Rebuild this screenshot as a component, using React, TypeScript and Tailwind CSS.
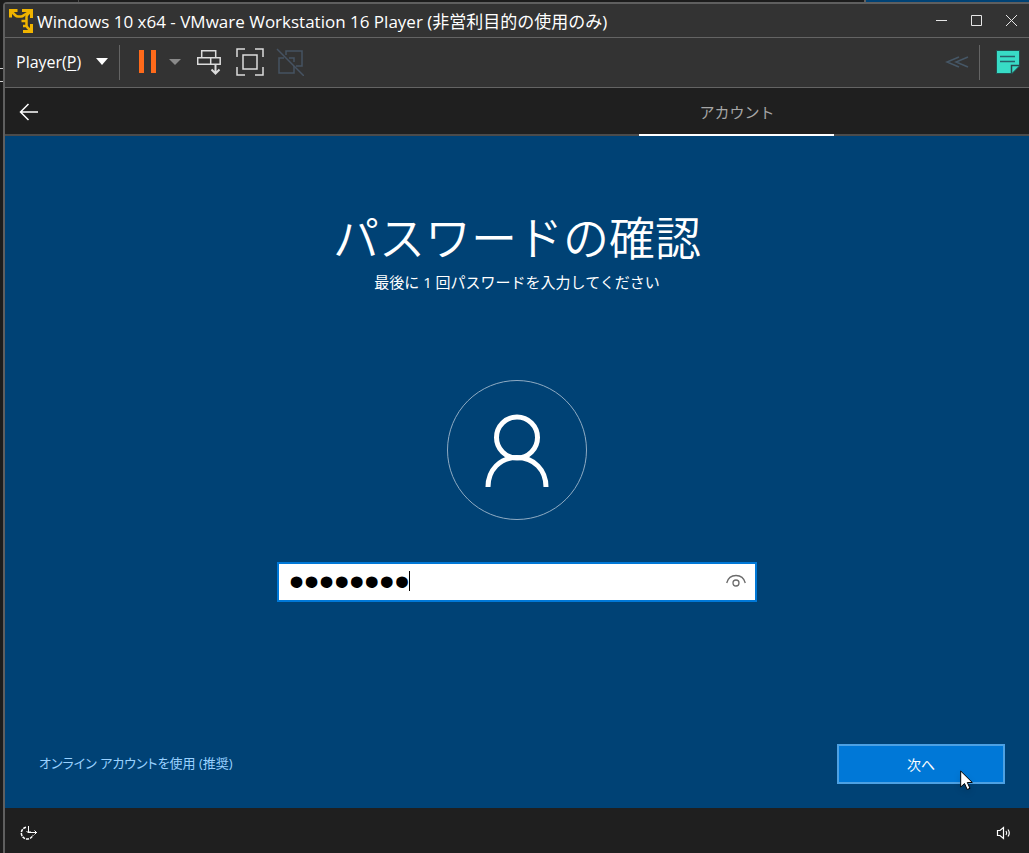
import React, { useState } from "react";

type IconButtonProps = {
  label: string;
  className?: string;
  children: React.ReactNode;
};

const IconButton = ({ label, className, children }: IconButtonProps) => {
  return (
    <button
      type="button"
      aria-label={label}
      className={`flex items-center justify-center shrink-0 ${className ?? ""}`}
    >
      {children}
    </button>
  );
};

const Logo = () => (
  <svg width="24" height="24" viewBox="0 0 24 24" fill="none">
    <g stroke="#f0b400" strokeWidth="3">
      <path d="M1.5 8.500V1.500H8.500" />
      <path d="M13 1.500h9.500V9" />
      <path d="M22.500 15v7.500H14" />
    </g>
    <g stroke="#f0b400" strokeWidth="2.5">
      <path d="M2 2l4.500 4.500q1 1 2.500 1h3q1.500 0 2.500-1L20 3" />
      <path d="M21 3l-2.500 2.500q-1 1-1 2.500v8q0 1.500 1 2.500L22 22" />
      <path d="M12.500 12h5M14 17h4" />
    </g>
  </svg>
);

const TitleBar = () => {
  return (
    <header className="flex h-[34px] items-center border-b border-[#646464] bg-[#333333] pl-1">
      <Logo />
      <h1 className="ml-1 flex-1 pt-0.5 text-[17px] text-white whitespace-nowrap">
        Windows 10 x64 - VMware Workstation 16 Player (非営利目的の使用のみ)
      </h1>
      <IconButton label="Minimize" className="h-8 w-[35px]">
        <svg width="11" height="11" viewBox="0 0 11 11" stroke="#e6e6e6">
          <path d="M0 5.500h11" />
        </svg>
      </IconButton>
      <IconButton label="Maximize" className="h-8 w-[35px]">
        <svg width="11" height="11" viewBox="0 0 11 11" stroke="#e6e6e6" fill="none">
          <path d="M.5.5h10v10H.5z" />
        </svg>
      </IconButton>
      <IconButton label="Close" className="h-8 w-[35px]">
        <svg width="11" height="11" viewBox="0 0 11 11" stroke="#e6e6e6">
          <path d="M0 0l11 11M11 0L0 11" />
        </svg>
      </IconButton>
    </header>
  );
};

const ToolBar = () => {
  return (
    <div className="flex h-[50px] items-center border-b border-[#646464] bg-[#333333] pb-px">
      <button
        type="button"
        className="ml-[11px] flex items-center gap-[15px] text-[16px] text-white"
      >
        <span>
          Player(<u className="underline-offset-2">P</u>)
        </span>
        <svg width="12" height="8" viewBox="0 0 12 8" fill="#ffffff">
          <path d="M0 0h12L6 7z" />
        </svg>
      </button>
      <div className="ml-[11px] h-[35px] w-px bg-[#646464]" />
      <IconButton label="Suspend" className="ml-[18px]">
        <svg width="19" height="24" viewBox="0 0 19 24" fill="#ff6a1a">
          <path d="M1 0h5v23H1zM13 0h5v23h-5z" />
        </svg>
      </IconButton>
      <IconButton label="Power options" className="ml-3">
        <svg width="12" height="8" viewBox="0 0 12 8" fill="#8a8a8a">
          <path d="M0 1h12L6 7z" />
        </svg>
      </IconButton>
      <IconButton label="Send Ctrl+Alt+Del" className="ml-4">
        <svg
          width="24"
          height="26"
          viewBox="0 0 24 26"
          fill="none"
          stroke="#dcdcdc"
          strokeWidth="1.5"
        >
          <path d="M4.700 1.700h14v7h-14zM.7 8.700h13v6.500H.7zM13.700 8.700h9.500v6.500h-9.500" />
          <path d="M18.500 15v9M14.500 20.500l4 4 4-4" strokeWidth="2" />
        </svg>
      </IconButton>
      <IconButton label="Full screen" className="ml-[15px]">
        <svg
          width="28"
          height="28"
          viewBox="0 0 28 28"
          fill="none"
          stroke="#dcdcdc"
          strokeWidth="1.5"
        >
          <path d="M1 9V1h8M19 1h8v8M27 19v8h-8M9 27H1v-8M7 7h14v14H7z" />
        </svg>
      </IconButton>
      <IconButton label="Unity" className="ml-3">
        <svg
          width="28"
          height="28"
          viewBox="0 0 28 28"
          fill="none"
          stroke="#465362"
          strokeWidth="1.5"
        >
          <path d="M10 7V3h16v15h-6" />
          <path d="M8 10H3v15h15v-7M13 10h5v4" />
          <path d="M1 1l27 27" />
        </svg>
      </IconButton>
      <IconButton label="Show devices" className="ml-auto">
        <svg
          width="24"
          height="12"
          viewBox="0 0 24 12"
          fill="none"
          stroke="#465766"
          strokeWidth="1.5"
        >
          <path d="M14 1L2 6l12 5M23 1L11 6l12 5" />
        </svg>
      </IconButton>
      <div className="ml-[10px] h-[35px] w-px bg-[#646464]" />
      <IconButton label="Notes" className="ml-4 mr-[9px]">
        <svg width="24" height="24" viewBox="0 0 24 24">
          <path d="M.5.5h23V16L16 23.500H.5z" fill="#38dcc6" stroke="#23504f" />
          <path d="M23.500 15.500H15.500v8" fill="none" stroke="#27484e" strokeWidth="1.500" />
          <path d="M4 6.500h15M4 11.500h15" stroke="#27606a" strokeWidth="1.500" />
        </svg>
      </IconButton>
    </div>
  );
};

const SetupHeader = () => {
  return (
    <nav className="flex h-12 items-stretch bg-[#1f1f1f]">
      <div className="flex flex-1 border-b-2 border-[#4b4b4b] pl-[14px] pt-0.5">
        <IconButton label="戻る">
          <svg
            width="20"
            height="18"
            viewBox="0 0 20 18"
            fill="none"
            stroke="#ffffff"
            strokeWidth="1.500"
          >
            <path d="M19 9H1.500M9.500 1l-8 8 8 8" />
          </svg>
        </IconButton>
      </div>
      <a
        href="#account"
        className="flex w-[195px] items-center justify-center border-b-2 border-white pt-0.5 text-[15px] text-[#a6a6a6]"
      >
        アカウント
      </a>
      <div className="w-[19%] border-b-2 border-[#4b4b4b]" />
    </nav>
  );
};

const Avatar = () => (
  <svg width="140" height="140" viewBox="0 0 140 140" fill="none" stroke="#ffffff">
    <circle cx="70" cy="70" r="69.5" stroke="#8fabc3" />
    <circle cx="70" cy="57.500" r="20.500" strokeWidth="5" />
    <path d="M41 107C41 90 53 77.500 70 77.500S99 90 99 107" strokeWidth="5" />
  </svg>
);

const PasswordField = () => {
  const [password, setPassword] = useState("password");

  return (
    <div className="relative flex h-10 w-full max-w-[480px] items-center border-2 border-[#0078d7] bg-white">
      <label htmlFor="password" className="sr-only">
        パスワードの確認
      </label>
      <input
        id="password"
        type="password"
        value={password}
        onChange={(e) => setPassword(e.target.value)}
        className="-mb-2.5 -mt-3 h-[58px] min-w-0 flex-1 bg-transparent pl-[10px] font-['Liberation_Sans',sans-serif] text-[43px] leading-normal text-black outline-none"
      />
      <span className="absolute left-[130px] top-[7px] h-5 w-px bg-black" />
      <IconButton label="パスワードを表示" className="mb-0.5 mr-[9px]">
        <svg width="20" height="14" viewBox="0 0 20 14" fill="none" stroke="#6b6b6b">
          <path d="M.7 9C2 4 5.500 1.500 10 1.500S18 4 19.300 9" strokeWidth="1.300" />
          <circle cx="10" cy="9" r="3" strokeWidth="1.300" />
        </svg>
      </IconButton>
    </div>
  );
};

const Cursor = () => (
  <svg
    width="14"
    height="21"
    viewBox="0 0 14 21"
    className="absolute right-[31px] top-[26px] pointer-events-none drop-shadow-md"
  >
    <path
      d="M.7 1v16l3.800-3.500 2.700 6 2.800-1.200-2.700-5.800h5z"
      fill="#ffffff"
      stroke="#000000"
    />
  </svg>
);

const SetupPage = () => {
  return (
    <main className="flex flex-1 flex-col items-center bg-[#004275] px-6 pb-6 pt-[69px]">
      <h2 className="text-[46px] font-[350] leading-[64px] text-white">
        パスワードの確認
      </h2>
      <p className="mt-[3px] text-[15px] leading-5 text-white">
        最後に 1 回パスワードを入力してください
      </p>
      <div className="mb-[42px] mt-[88px]">
        <Avatar />
      </div>
      <PasswordField />
      <div className="mt-auto flex w-full items-center justify-between">
        <a
          href="#online"
          className="ml-[10px] text-[13px] text-[#99d1ff] [font-feature-settings:'palt']"
        >
          オンライン アカウントを使用 (推奨)
        </a>
        <div className="relative">
          <button
            type="button"
            className="h-10 w-[168px] border-2 border-[#4da1e3] bg-[#0078d7] text-[14px] text-white"
          >
            次へ
          </button>
          <Cursor />
        </div>
      </div>
    </main>
  );
};

const SetupFooter = () => {
  return (
    <footer className="flex h-[45px] items-center justify-between bg-[#1f1f1f] pl-[15px] pr-4 pt-1">
      <IconButton label="コンピューターの簡単操作">
        <svg width="18" height="16" viewBox="0 0 18 16" fill="none" stroke="#ffffff">
          <path
            d="M6 2.200A6 6 0 1 0 13 10"
            strokeWidth="1.500"
            strokeDasharray="3 1"
          />
          <path d="M8.500 1v7M6.500 6l2 2 2-2M9 7.500h8M14.500 5.500l2 2-2 2" />
        </svg>
      </IconButton>
      <IconButton label="音量">
        <svg width="17" height="14" viewBox="0 0 17 14" fill="none" stroke="#ffffff">
          <path d="M1.500 4.500h2.500l3.500-3v11l-3.500-3H1.500z" strokeWidth="1.200" />
          <path d="M10 5q1.500 2 0 4M12 3.500q2.500 3.500 0 7" strokeWidth="1.200" />
        </svg>
      </IconButton>
    </footer>
  );
};

export default function App() {
  return (
    <div className="flex min-h-screen flex-col bg-[#1c1c1c] font-['Open_Sans','Noto_Sans_CJK_JP',sans-serif]">
      {/* desktop strip above the window */}
      <div className="flex h-0.5">
        <div className="ml-[78px] w-px bg-[#4b4b4b]" />
        <div className="ml-auto w-[165px] border-l-2 border-[#5f5f5f] bg-[#004275]" />
      </div>
      <div className="flex flex-1">
        {/* desktop strip left of the window */}
        <div className="w-[3px] pt-[66px]">
          <div className="h-[14px] border-y border-[#d0d0d0]" />
        </div>
        <div className="flex min-w-0 flex-1 flex-col rounded-tl border-l-2 border-t-2 border-[#5f5f5f]">
          <TitleBar />
          <ToolBar />
          <SetupHeader />
          <SetupPage />
          <SetupFooter />
        </div>
      </div>
    </div>
  );
}
